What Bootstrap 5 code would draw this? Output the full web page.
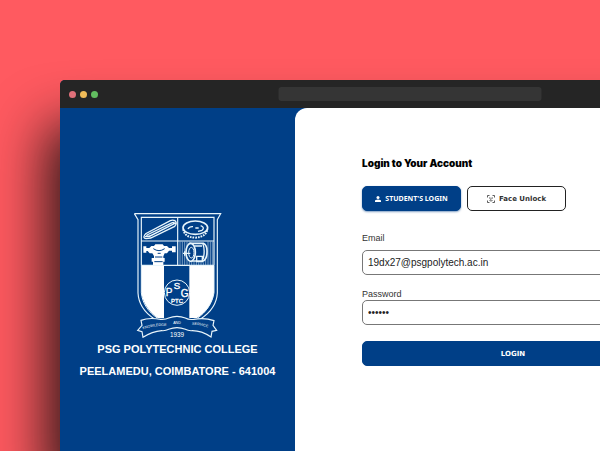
<!DOCTYPE html>
<html lang="en">
<head>
<meta charset="utf-8">
<meta name="viewport" content="width=device-width, initial-scale=1">
<title>PSG Polytechnic College - Login</title>
<link rel="stylesheet" href="https://cdn.jsdelivr.net/npm/bootstrap@5.3.0/dist/css/bootstrap.min.css">
<style>
:root { --brand: #003f87; --ui: "Liberation Sans", Arial, sans-serif; --display: Inter, sans-serif; --tiny: "DejaVu Sans", Verdana, sans-serif; }
body { background: #ff5a60; font-family: var(--ui); min-height: 100vh; padding: 80px 0 0 60px; }
.browser { width: calc(100vw + 99px); min-height: calc(100vh - 80px); border-radius: 5px 5px 0 0; background: var(--brand); box-shadow: -12px 46px 55px rgba(25, 18, 18, .95); }
.titlebar { height: 28px; padding-left: 9px; background: #252525; border-radius: 5px 5px 0 0; }
.dot { width: 7px; height: 7px; }
.dot-red { background: #e0707a; }
.dot-amber { background: #f0bb58; }
.dot-green { background: #62bd60; }
.address { width: 263px; height: 14px; background: #353535; border-radius: 3px; }
.brand-side { width: 235px; padding-top: 104px; }
.crest { width: 90px; height: 126px; }
.college { font-size: 11px; line-height: 22px; }
.login-side { border-radius: 12px 0 0 0; padding: 46px 95px 0 67px; }
.login-title { font: 900 10px/18px var(--display); margin-bottom: 14px; }
.modes { gap: 6px; margin-bottom: 21px; }
.mode { --bs-btn-border-radius: 5px; width: 99px; height: 25px; font: 700 7px/10px var(--tiny); }
.btn-brand { --bs-btn-color: #fff; --bs-btn-bg: var(--brand); --bs-btn-border-color: var(--brand); --bs-btn-hover-color: #fff; --bs-btn-hover-bg: #00336e; }
.mode.btn-brand { font-family: "Noto Sans", sans-serif; box-shadow: 0 1px 2px #003f8780; }
.btn-line { --bs-btn-color: #333; --bs-btn-border-color: #222; --bs-btn-hover-bg: #eee; }
.field-group { margin-bottom: 13px; }
.field-group .field-label { margin-bottom: 6px; }
.field-label { font-size: 9px; line-height: 12px; color: #333; }
.field { height: 25px; padding: 0 5px; border: 1px solid #777; border-radius: 5px; font-size: 10px; color: #222; }
.submit { --bs-btn-border-radius: 5px; height: 25px; font: 700 7px/10px var(--tiny); }
</style>
</head>
<body class="overflow-hidden">
<div class="browser d-flex flex-column">
  <header class="titlebar d-flex align-items-center position-relative">
    <div class="d-flex gap-1">
      <span class="dot dot-red rounded-circle"></span>
      <span class="dot dot-amber rounded-circle"></span>
      <span class="dot dot-green rounded-circle"></span>
    </div>
    <div class="address position-absolute top-50 start-50 translate-middle"></div>
  </header>
  <main class="d-flex flex-grow-1">
    <aside class="brand-side flex-shrink-0 text-center text-white">
      <svg class="crest d-block mx-auto" viewBox="38 36 270 378" fill="none" stroke="#e8f5fb" stroke-width="3" role="img" aria-label="PSG Polytechnic College crest">
        <path fill="#fff" stroke="none" d="M63 196H131V354H112C91 340 69 313 63 280ZM207 196H281V278C277 312 254 340 230 354H207Z"/>
        <path d="M42 41H301L291 59V279C289 315 266 340 242 356M42 41L53 59V279C55 315 77 340 101 356M63 196V52H281V196M63 123H281M172 52V196M63 196H281" stroke-width="3.5"/>
        <path d="M63 196V278C66 310 85 337 111 354M281 196V278C276 310 256 337 232 354"/>
        <path stroke-width="4" d="M73 105Q67 115 77 116L91 114L163 79Q172 69 164 62Q157 59 150 62L76 101ZM80 105L156 68Q165 65 159 72L88 108Q77 111 80 105ZM74 110L88 109L166 69"/>
        <ellipse cx="225" cy="83" rx="37" ry="20" stroke-width="5"/>
        <path stroke-width="6" stroke-dasharray="5 3" d="M189 88Q192 112 225 113Q258 111 261 87"/>
        <path stroke-width="4" d="M203 87Q207 79 218 80M225 84H235M241 77Q255 83 245 91L233 94"/>
        <path stroke-width="1.5" d="M179 125V195M186 125V195M193 125V195M200 125V195M207 125V195M214 182V195M221 184V195M228 184V195M235 187V195M242 187V195M249 187V195M256 180V195M263 125V195M270 125V195M276 125V195"/>
        <path fill="#fff" stroke="none" d="M69 139H78V144H87L93 138H101L105 133H127L131 138H140L146 144H155V139H166V157H155V152H146L140 160H133L129 169V174H133V185H129V195H98V185H94V174H101V168L96 160H88L82 153H78V158H69Z"/>
        <path stroke="#003f87" d="M99 146Q116 158 133 146M104 171H126M102 185H127M112 160H121"/>
        <path fill="#003f87" stroke-width="5" d="M211 130H249Q261 136 260 156Q260 176 249 183H212Z"/>
        <ellipse cx="211" cy="157" rx="14" ry="27" fill="#003f87" stroke-width="5"/>
        <ellipse cx="213" cy="158" rx="8" ry="16" stroke-width="3"/>
        <path stroke-width="4" d="M188 160H210M193 154V167M248 132Q255 153 248 178M229 169H246V185H229ZM222 138H245"/>
        <circle cx="170" cy="278" r="38" stroke-width="3"/>
        <g fill="#fff" stroke="#fff" stroke-width="1" font-family="Liberation Sans, Arial, sans-serif" text-anchor="middle">
          <text x="170" y="266" font-size="29">S</text>
          <text x="146" y="289" font-size="30">P</text>
          <text x="193" y="290" font-size="30">G</text>
          <text x="170" y="309" font-size="18">PTC</text>
          <text x="170" y="411" font-size="19" stroke="none">1939</text>
        </g>
        <path fill="#003f87" stroke-width="3.5" d="M62 361Q85 352 121 358Q136 359 145 354Q170 344 195 354Q205 360 220 358Q253 352 281 362L278 376L289 391L275 394L272 411Q244 392 216 392Q204 393 195 388Q170 378 145 388Q136 393 124 392Q96 394 68 412L65 395L52 391L65 376Z"/>
        <path id="motto-left" stroke="none" d="M68 388Q96 376 142 378"/>
        <path id="motto-right" stroke="none" d="M215 374Q244 374 273 387"/>
        <g fill="#fff" stroke="none" font-family="Liberation Sans, Arial, sans-serif" font-size="11">
          <text><textPath href="#motto-left">KNOWLEDGE</textPath></text>
          <text x="170" y="373" text-anchor="middle">AND</text>
          <text><textPath href="#motto-right">SERVICE</textPath></text>
        </g>
      </svg>
      <div class="college fw-bold">PSG POLYTECHNIC COLLEGE</div>
      <div class="college fw-bold">PEELAMEDU, COIMBATORE - 641004</div>
    </aside>
    <section class="login-side flex-grow-1 bg-white">
      <h1 class="login-title text-black">Login to Your Account</h1>
      <form>
        <div class="modes d-flex">
          <button type="button" class="btn btn-brand mode d-flex align-items-center justify-content-center p-0 gap-1">
            <svg width="6" height="6" viewBox="0 0 12 12" fill="currentColor" aria-hidden="true"><circle cx="6" cy="3" r="3"/><path d="M0 12V10Q0 7 6 7T12 10V12Z"/></svg>
            STUDENT'S LOGIN
          </button>
          <button type="button" class="btn btn-line mode d-flex align-items-center justify-content-center p-0 gap-1">
            <svg width="8" height="8" viewBox="0 0 16 16" fill="none" stroke="currentColor" stroke-width="1.6" aria-hidden="true"><path d="M1 5V1H5M11 1H15V5M15 11V15H11M5 15H1V11M5 5V7M11 5V7M8 5V9H7M5 11Q8 13 11 11"/></svg>
            Face Unlock
          </button>
        </div>
        <div class="field-group">
          <label class="field-label d-block" for="email">Email</label>
          <input class="field w-100 d-block" id="email" type="email" value="19dx27@psgpolytech.ac.in">
        </div>
        <div class="mb-3">
          <label class="field-label d-block" for="password">Password</label>
          <input class="field w-100 d-block" id="password" type="password" value="secret">
        </div>
        <button type="submit" class="btn btn-brand submit w-100 p-0">LOGIN</button>
      </form>
    </section>
  </main>
</div>
<script src="https://cdn.jsdelivr.net/npm/bootstrap@5.3.0/dist/js/bootstrap.bundle.min.js"></script>
</body>
</html>
